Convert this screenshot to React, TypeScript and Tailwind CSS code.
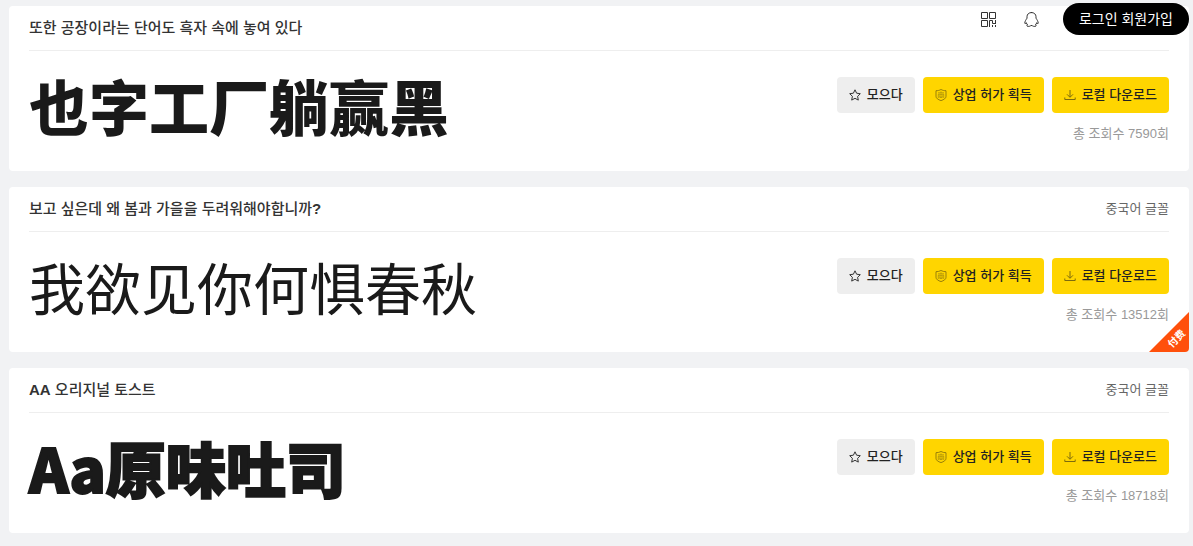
import type { ReactNode } from 'react';
import clsx from 'clsx';

type FontItem = {
  id: string;
  title: ReactNode;
  category?: string;
  preview: string;
  previewClass: string;
  views: number;
  paid?: boolean;
};

const fonts: FontItem[] = [
  {
    id: 'yezi-tangying',
    title: '또한 공장이라는 단어도 흑자 속에 놓여 있다',
    preview: '也字工厂躺赢黑',
    previewClass: 'text-[60px] font-black',
    views: 7590,
  },
  {
    id: 'chunqiu',
    title: <>보고 싶은데 왜 봄과 가을을 두려워해야합니까<b>?</b></>,
    category: '중국어 글꼴',
    preview: '我欲见你何惧春秋',
    previewClass: 'text-[56px] font-normal',
    views: 13512,
    paid: true,
  },
  {
    id: 'aa-toast',
    title: <><b>AA</b> 오리지널 토스트</>,
    category: '중국어 글꼴',
    preview: 'Aa原味吐司',
    previewClass: 'text-[60px] font-black [-webkit-text-stroke:2px_#1a1a1a] [stroke-linejoin:round]',
    views: 18718,
  },
];

function StarIcon() {
  return (
    <svg viewBox="0 0 12 12" className="size-3 shrink-0" fill="none" stroke="#333" strokeLinejoin="round" aria-hidden="true">
      <path d="M6 .8 7.6 4.2l3.7.5-2.7 2.6.7 3.8L6 9.3l-3.3 1.8.7-3.8L.7 4.7l3.7-.5z" />
    </svg>
  );
}

function LicenseIcon() {
  return (
    <svg viewBox="0 0 12 12" className="size-3 shrink-0" fill="none" stroke="#7d6b0e" strokeWidth=".8" aria-hidden="true">
      <path d="M6 .5c1.6.9 3.2 1.2 5 1.2v5.6c0 2-2 3.300-5 4.300-3-1-5-2.300-5-4.300V1.700C2.800 1.700 4.400 1.400 6 .5z" />
      <path d="M6 2.400v1.200M3 3.800h6M3.300 9V5.200h5.400V9M5.300 5.300l-.8 1.200M6.700 5.300l.8 1.200M4.800 7h2.400v1.500H4.800z" strokeWidth=".5" />
    </svg>
  );
}

function DownloadIcon() {
  return (
    <svg viewBox="0 0 12 12" className="size-3 shrink-0" fill="none" stroke="#7d6b0e" aria-hidden="true">
      <path d="M6 1v7M3 5.300l3 3 3-3M.8 8.500v2h10.400v-2" />
    </svg>
  );
}

function QrIcon() {
  return (
    <svg viewBox="0 0 15 15" className="size-[15px]" fill="none" stroke="#333" aria-hidden="true">
      <path d="M.5.5h6v6h-6zM8.500.5h6v6h-6zM.5 8.500h6v6h-6zM8.500 15V8.500h3v3h3M14.500 8v4M11.500 15v-2M14.500 13v2" />
    </svg>
  );
}

function QqIcon() {
  return (
    <svg viewBox="0 0 15 15" className="size-[15px]" fill="none" stroke="#333" strokeLinejoin="round" strokeLinecap="round" aria-hidden="true">
      <path d="M7.500.5C4.700.5 3 2.400 3 4.700v1.500C2 7.700.8 9.500.8 11c0 .9.600 1 1.500-.3.2 1 .7 1.700 1.300 2.200-1.300.4-1 1.500.6 1.500 1.400 0 2-.3 2.700-.9h1.200c.7.600 1.300.9 2.700.9 1.600 0 1.900-1.100.6-1.500.6-.5 1.100-1.200 1.300-2.200.9 1.300 1.500 1.200 1.500.3 0-1.500-1.200-3.300-2.200-4.800V4.700C12 2.400 10.300.5 7.500.5z" />
    </svg>
  );
}

function ActionButton({ icon, children, muted }: { icon: ReactNode; children: ReactNode; muted?: boolean }) {
  return (
    <button
      type="button"
      className={clsx(
        'flex h-9 items-center gap-1.5 rounded px-3 text-[13px] font-medium whitespace-nowrap text-[#222]',
        muted ? 'bg-[#eee]' : 'bg-[#ffd500]'
      )}
    >
      {icon}
      {children}
    </button>
  );
}

function FontCard({ font }: { font: FontItem }) {
  return (
    <article className="relative overflow-hidden rounded bg-white px-5 pb-7">
      <header className="flex h-[45px] items-center justify-between border-b border-[#eee]">
        <h2 className="text-[15px] font-medium text-[#333]">
          <a href={`#${font.id}`}>{font.title}</a>
        </h2>
        {font.category && <span className="text-[13px] text-[#666]">{font.category}</span>}
      </header>

      <div className="flex items-start justify-between pt-[26px]">
        <a
          href={`#${font.id}`}
          lang="zh-CN"
          className={clsx(
            'h-14 leading-[56px] whitespace-nowrap text-[#1a1a1a] font-["Noto_Sans_CJK_SC",sans-serif]',
            font.previewClass
          )}
        >
          {font.preview}
        </a>
        <div className="flex flex-col items-end gap-[11px]">
          <div className="flex gap-2">
            <ActionButton icon={<StarIcon />} muted>모으다</ActionButton>
            <ActionButton icon={<LicenseIcon />}>상업 허가 획득</ActionButton>
            <ActionButton icon={<DownloadIcon />}>로컬 다운로드</ActionButton>
          </div>
          <p className="text-[13px] leading-[19px] text-[#999]">총 조회수 {font.views}회</p>
        </div>
      </div>

      {font.paid && (
        <div className="absolute right-0 bottom-0 flex size-10 items-end justify-end bg-[#ff500b] pr-0.5 pb-1 [clip-path:polygon(100%_0,100%_100%,0_100%)]">
          <span lang="zh-CN" className="-rotate-45 text-[10px] leading-[18px] font-bold whitespace-nowrap text-white">付费</span>
        </div>
      )}
    </article>
  );
}

export default function App() {
  return (
    <div lang="ko" className='relative min-h-screen bg-[#f1f2f4] pt-1.5 pr-1 pb-3 pl-[9px] font-["Liberation_Sans","Noto_Sans_CJK_KR",sans-serif]'>
      <nav className="absolute top-[3px] right-1 z-10 flex items-center">
        <a href="#qr" aria-label="QR" className="mr-7">
          <QrIcon />
        </a>
        <a href="#qq" aria-label="QQ" className="mr-6">
          <QqIcon />
        </a>
        <button type="button" className="h-8 rounded-full bg-black px-4 text-sm text-white">
          로그인 회원가입
        </button>
      </nav>

      <main className="flex flex-col gap-4">
        {fonts.map((font) => (
          <FontCard key={font.id} font={font} />
        ))}
      </main>
    </div>
  );
}
